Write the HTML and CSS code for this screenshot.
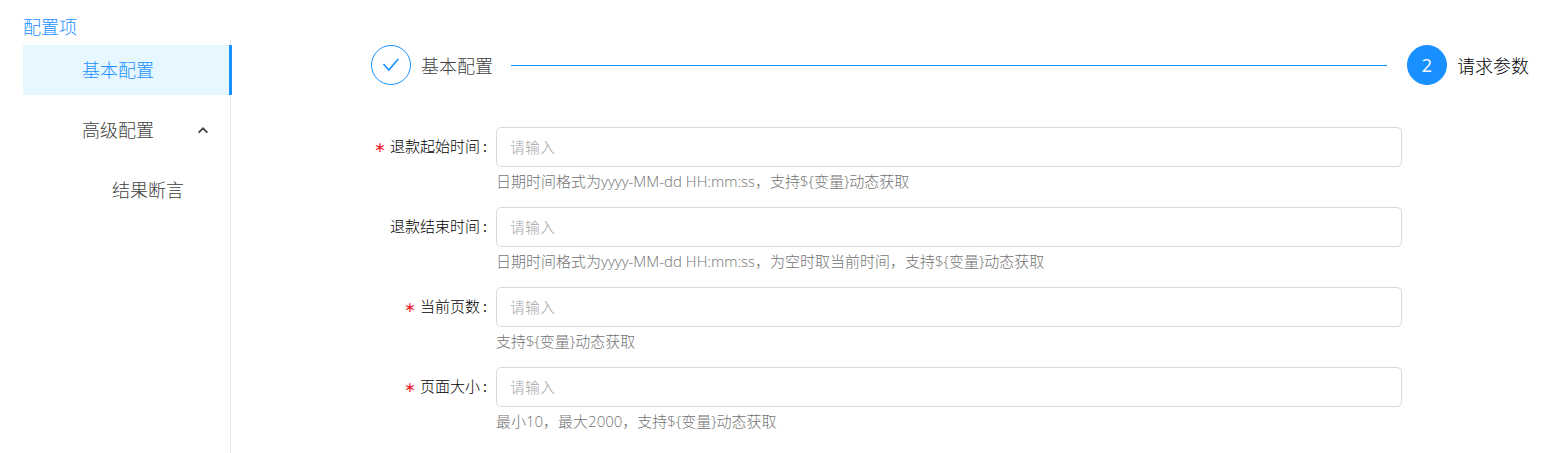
FILE: index.html
```html
<!DOCTYPE html>
<html lang="zh-CN">
<head>
<meta charset="utf-8">
<meta name="viewport" content="width=device-width, initial-scale=1">
<title>配置项</title>
<link rel="stylesheet" href="styles.css">
</head>
<body>
<div class="page">
  <aside class="sidebar">
    <h1 class="sidebar-title">配置项</h1>
    <nav class="menu">
      <a class="menu-item menu-item-active" href="#basic">基本配置</a>
      <button class="menu-item menu-toggle" type="button" aria-expanded="true">
        <span>高级配置</span>
        <svg class="menu-arrow" viewBox="0 0 10 8" aria-hidden="true"><path d="M.6 7.700 5 3.300l4.400 4.400"/></svg>
      </button>
      <a class="menu-item menu-item-sub" href="#assert">结果断言</a>
    </nav>
  </aside>
  <main class="content">
    <ol class="steps">
      <li class="step step-done">
        <span class="step-icon">
          <svg class="step-check" viewBox="0 0 18 14" aria-hidden="true"><path d="M1.500 6 6.800 12 16.300 1"/></svg>
        </span>
        <span class="step-title">基本配置</span>
      </li>
      <li class="step step-current" aria-current="step">
        <span class="step-icon">2</span>
        <span class="step-title">请求参数</span>
      </li>
    </ol>
    <form class="form">
      <div class="field">
        <label class="label required" for="start">退款起始时间</label>
        <input class="input" id="start" type="text" placeholder="请输入" required>
        <p class="help">日期时间格式为yyyy-MM-dd HH:mm:ss，支持${变量}动态获取</p>
      </div>
      <div class="field">
        <label class="label" for="end">退款结束时间</label>
        <input class="input" id="end" type="text" placeholder="请输入">
        <p class="help">日期时间格式为yyyy-MM-dd HH:mm:ss，为空时取当前时间，支持${变量}动态获取</p>
      </div>
      <div class="field">
        <label class="label required" for="page">当前页数</label>
        <input class="input" id="page" type="text" placeholder="请输入" required>
        <p class="help">支持${变量}动态获取</p>
      </div>
      <div class="field">
        <label class="label required" for="size">页面大小</label>
        <input class="input" id="size" type="text" placeholder="请输入" required>
        <p class="help">最小10，最大2000，支持${变量}动态获取</p>
      </div>
    </form>
  </main>
</div>
</body>
</html>
```
FILE: styles.css
```css
* {
  box-sizing: border-box;
}

body {
  margin: 0;
  background: #fff;
  color: #000;
  font-family: "Open Sans", "Noto Sans CJK SC", sans-serif;
  font-size: 15px;
  font-weight: 300;
}

.page {
  display: flex;
  min-height: 100vh;
  padding: 14px 18px 0 23px;
}

.sidebar {
  display: flex;
  flex-direction: column;
  flex: 0 0 209px;
}

.sidebar-title {
  margin: 0;
  color: #1890ff;
  font-size: 18px;
  font-weight: 300;
  line-height: 26px;
}

.menu {
  display: flex;
  flex: 1;
  flex-direction: column;
  gap: 10px;
  margin-right: 1px;
  padding-top: 5px;
  border-right: 1px solid #e8e8e8;
}

.menu-item {
  display: flex;
  flex: none;
  align-items: center;
  height: 50px;
  padding: 0 22px 2px 59px;
  border: 0;
  background: none;
  color: #404040;
  font: inherit;
  font-size: 18px;
  text-decoration: none;
}

.menu-item-active {
  margin-right: -2px;
  border-right: 3px solid #1890ff;
  background: #e6f7ff;
  color: #1890ff;
}

.menu-toggle {
  justify-content: space-between;
}

.menu-arrow {
  width: 10px;
  height: 8px;
  overflow: visible;
  fill: none;
  stroke: #404040;
  stroke-width: 1.700;
}

.menu-item-sub {
  padding-left: 89px;
}

.content {
  flex: 1;
  min-width: 0;
  padding: 31px 0 0 139px;
}

.steps {
  display: flex;
  gap: 20px;
  margin: 0;
  padding: 0;
  list-style: none;
}

.step {
  display: flex;
  align-items: center;
  gap: 10px;
  font-size: 18px;
}

.step-done {
  flex: 1;
  color: #404040;
}

.step-done::after {
  flex: 1;
  height: 1px;
  margin-left: 8px;
  background: #1890ff;
  content: "";
}

.step-icon {
  display: flex;
  align-items: center;
  justify-content: center;
  width: 40px;
  height: 40px;
  border: 1px solid #1890ff;
  border-radius: 50%;
}

.step-check {
  width: 18px;
  height: 14px;
  fill: none;
  stroke: #1890ff;
  stroke-width: 1.600;
}

.step-current .step-icon {
  background: #1890ff;
  color: #fff;
  font-weight: 400;
}

.form {
  display: grid;
  gap: 10px;
  margin-top: 42px;
  padding-right: 127px;
}

.field {
  display: grid;
  grid-template-columns: 116px minmax(0, 1fr);
  column-gap: 9px;
}

.label {
  line-height: 38px;
  text-align: right;
}

.label::after {
  margin-left: 3px;
  font-weight: 400;
  content: ":";
}

.required::before {
  margin-right: 4px;
  color: #f5222d;
  font-family: "DejaVu Sans", sans-serif;
  font-size: 14px;
  font-weight: 400;
  line-height: 1;
  content: "∗";
}

.input {
  width: 100%;
  height: 40px;
  padding: 0 13px;
  border: 1px solid #d9d9d9;
  border-radius: 5px;
  background: #fff;
  color: #222;
  font: inherit;
}

.input::placeholder {
  color: #a6a6a6;
}

.help {
  grid-column: 2;
  margin: 0;
  padding-bottom: 2px;
  color: #737373;
  line-height: 28px;
}
```
